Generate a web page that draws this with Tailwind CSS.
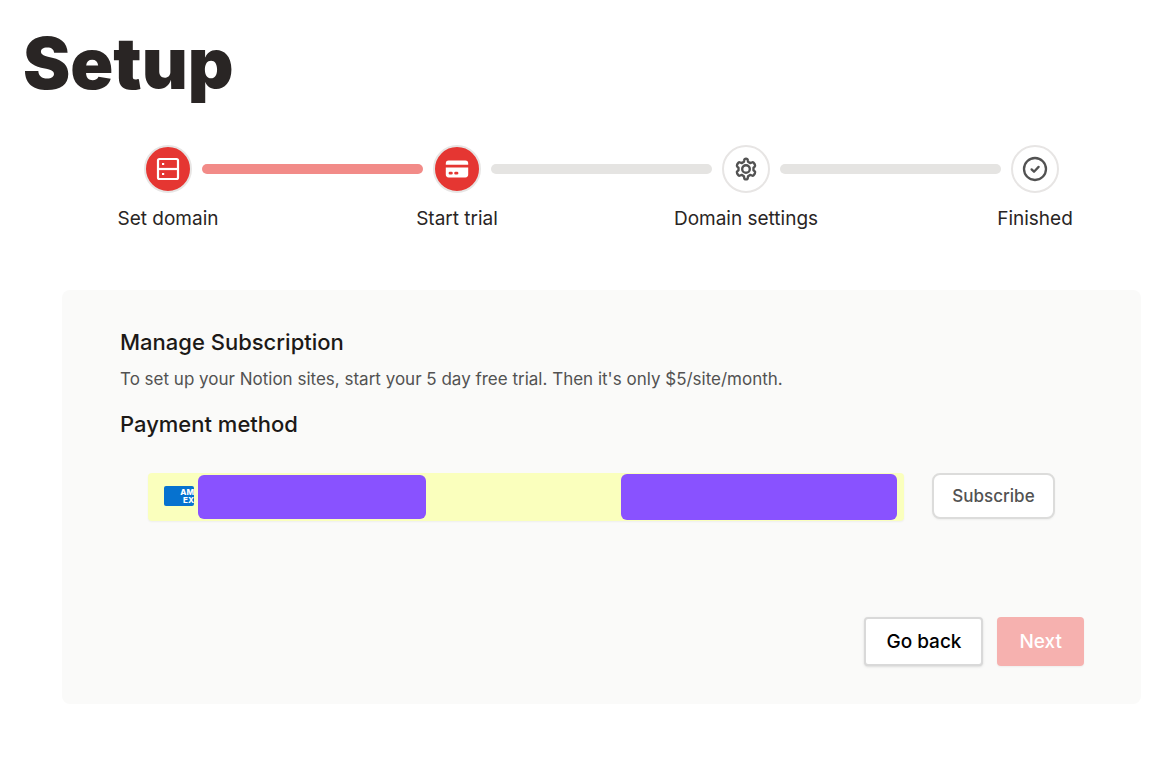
<!DOCTYPE html>
<html lang="en">
<head>
    <meta charset="UTF-8">
    <meta name="viewport" content="width=device-width, initial-scale=1.0">
    <title>Setup</title>
    <script src="https://cdn.jsdelivr.net/npm/@tailwindcss/browser@4"></script>
</head>
<body class="bg-white font-['Inter',sans-serif] text-stone-800">
    <header class="px-[23px] pt-[23px]">
        <h1 class="text-[71px] leading-20 font-black text-[#292524]">Setup</h1>
    </header>

    <main>
        <!-- Progress steps -->
        <ol class="mt-[42px] flex items-start pl-36 pr-[99px] text-[19px] leading-7">
            <li class="flex w-12 flex-col items-center">
                <span class="flex size-12 shrink-0 items-center justify-center rounded-full border-2 border-stone-200 bg-[#e53632] text-white">
                    <svg class="size-7" viewBox="0 0 28 28" fill="none" stroke="currentColor" stroke-width="2.2" aria-hidden="true">
                        <rect x="4" y="4" width="20" height="20" rx="1.5" />
                        <path d="M4 14h20" />
                        <path d="M8 9h2.2M8 19h2.2" />
                    </svg>
                </span>
                <span class="mt-3 whitespace-nowrap">Set domain</span>
            </li>
            <li class="mx-[10px] mt-[19px] h-[10px] flex-1 rounded-full bg-[#f28b88]" aria-hidden="true"></li>
            <li class="flex w-12 flex-col items-center" aria-current="step">
                <span class="flex size-12 shrink-0 items-center justify-center rounded-full border-2 border-stone-200 bg-[#e53632] text-white">
                    <svg class="size-7 shrink-0" viewBox="0 0 20 20" fill="currentColor" aria-hidden="true">
                        <path d="M4 4a2 2 0 00-2 2v1h16V6a2 2 0 00-2-2H4z" />
                        <path fill-rule="evenodd" clip-rule="evenodd" d="M18 9H2v5a2 2 0 002 2h12a2 2 0 002-2V9zM4 13a1 1 0 011-1h1a1 1 0 110 2H5a1 1 0 01-1-1zm5-1a1 1 0 100 2h1a1 1 0 100-2H9z" />
                    </svg>
                </span>
                <span class="mt-3 whitespace-nowrap">Start trial</span>
            </li>
            <li class="mx-[10px] mt-[19px] h-[10px] flex-1 rounded-full bg-[#e5e4e2]" aria-hidden="true"></li>
            <li class="flex w-12 flex-col items-center">
                <span class="flex size-12 shrink-0 items-center justify-center rounded-full border-2 border-stone-200 bg-white text-neutral-600">
                    <svg class="size-7" viewBox="0 0 28 28" fill="none" stroke="currentColor" stroke-width="2.4" stroke-linejoin="round" aria-hidden="true">
                        <path d="M12.2 5.2 Q12.4 3.6 14 3.6 Q15.6 3.6 15.8 5.2 L16.1 6.8 L18.3 8.1 L19.8 7.5 Q21.3 6.9 22.1 8.3 L22.9 9.7 Q23.6 11 22.4 12 L21.5 12.7 V15.3 L22.4 16 Q23.6 17 22.9 18.3 L22.1 19.7 Q21.3 21.1 19.8 20.5 L18.3 19.9 L16.1 21.2 L15.8 22.8 Q15.6 24.4 14 24.4 Q12.4 24.4 12.2 22.8 L11.9 21.2 L9.7 19.9 L8.2 20.5 Q6.7 21.1 5.9 19.7 L5.1 18.3 Q4.4 17 5.6 16 L6.5 15.3 V12.7 L5.6 12 Q4.4 11 5.1 9.7 L5.9 8.3 Q6.7 6.9 8.2 7.5 L9.7 8.1 L11.9 6.8 Z" />
                        <circle cx="14" cy="14" r="3.8" />
                    </svg>
                </span>
                <span class="mt-3 whitespace-nowrap">Domain settings</span>
            </li>
            <li class="mx-[10px] mt-[19px] h-[10px] flex-1 rounded-full bg-[#e5e4e2]" aria-hidden="true"></li>
            <li class="flex w-12 flex-col items-center">
                <span class="flex size-12 shrink-0 items-center justify-center rounded-full border-2 border-stone-200 bg-white text-neutral-600">
                    <svg class="size-7" viewBox="0 0 28 28" fill="none" stroke="currentColor" stroke-width="2.3" stroke-linecap="round" stroke-linejoin="round" aria-hidden="true">
                        <circle cx="14" cy="14" r="11" />
                        <path d="M10.6 14.4l2.4 2.3 4.6-4.8" />
                    </svg>
                </span>
                <span class="mt-3 whitespace-nowrap">Finished</span>
            </li>
        </ol>

        <!-- Subscription card -->
        <section class="mt-[57px] mr-[17px] mb-16 ml-[62px] rounded-lg bg-[#fafaf9] pt-9 pr-[57px] pb-[38px] pl-[58px]">
            <h2 class="text-[22px] leading-8 font-medium text-stone-900">Manage Subscription</h2>
            <p class="mt-[7px] text-[17px] leading-7 text-neutral-600">To set up your Notion sites, start your 5 day free trial. Then it's only $5/site/month.</p>
            <h2 class="mt-[15px] text-[22px] leading-8 font-medium text-stone-900">Payment method</h2>

            <div class="mt-[33px] flex items-start gap-7 pr-[29px] pl-7">
                <div class="flex h-12 flex-1 items-center rounded-sm bg-[#faffbd] pr-[7px] pl-4 shadow-xs">
                    <span class="mb-[3px] flex h-5 w-[30px] shrink-0 items-center justify-end rounded-xs bg-[#0672cf] text-right text-[8px] leading-[8px] font-extrabold text-white">AM<br>EX</span>
                    <span class="ml-1 h-11 w-[228px] rounded-md bg-[#8952ff]"></span>
                    <span class="ml-auto h-[46px] w-[276px] rounded-md bg-[#8952ff]"></span>
                </div>
                <button type="button" class="h-[46px] w-[123px] rounded-lg border-2 border-[#dcdcdb] bg-white pt-px text-[17px] font-medium text-neutral-600 shadow-xs">Subscribe</button>
            </div>

            <div class="mt-24 flex justify-end gap-[14px] text-[19px] font-medium">
                <button type="button" class="h-[49px] rounded-sm border-2 border-[#d9d9d9] bg-white px-5 pt-px text-black shadow-sm">Go back</button>
                <button type="button" class="h-[49px] rounded-sm bg-[#f6b1af] px-[22px] pt-px text-white shadow-xs" disabled>Next</button>
            </div>
        </section>
    </main>
</body>
</html>
